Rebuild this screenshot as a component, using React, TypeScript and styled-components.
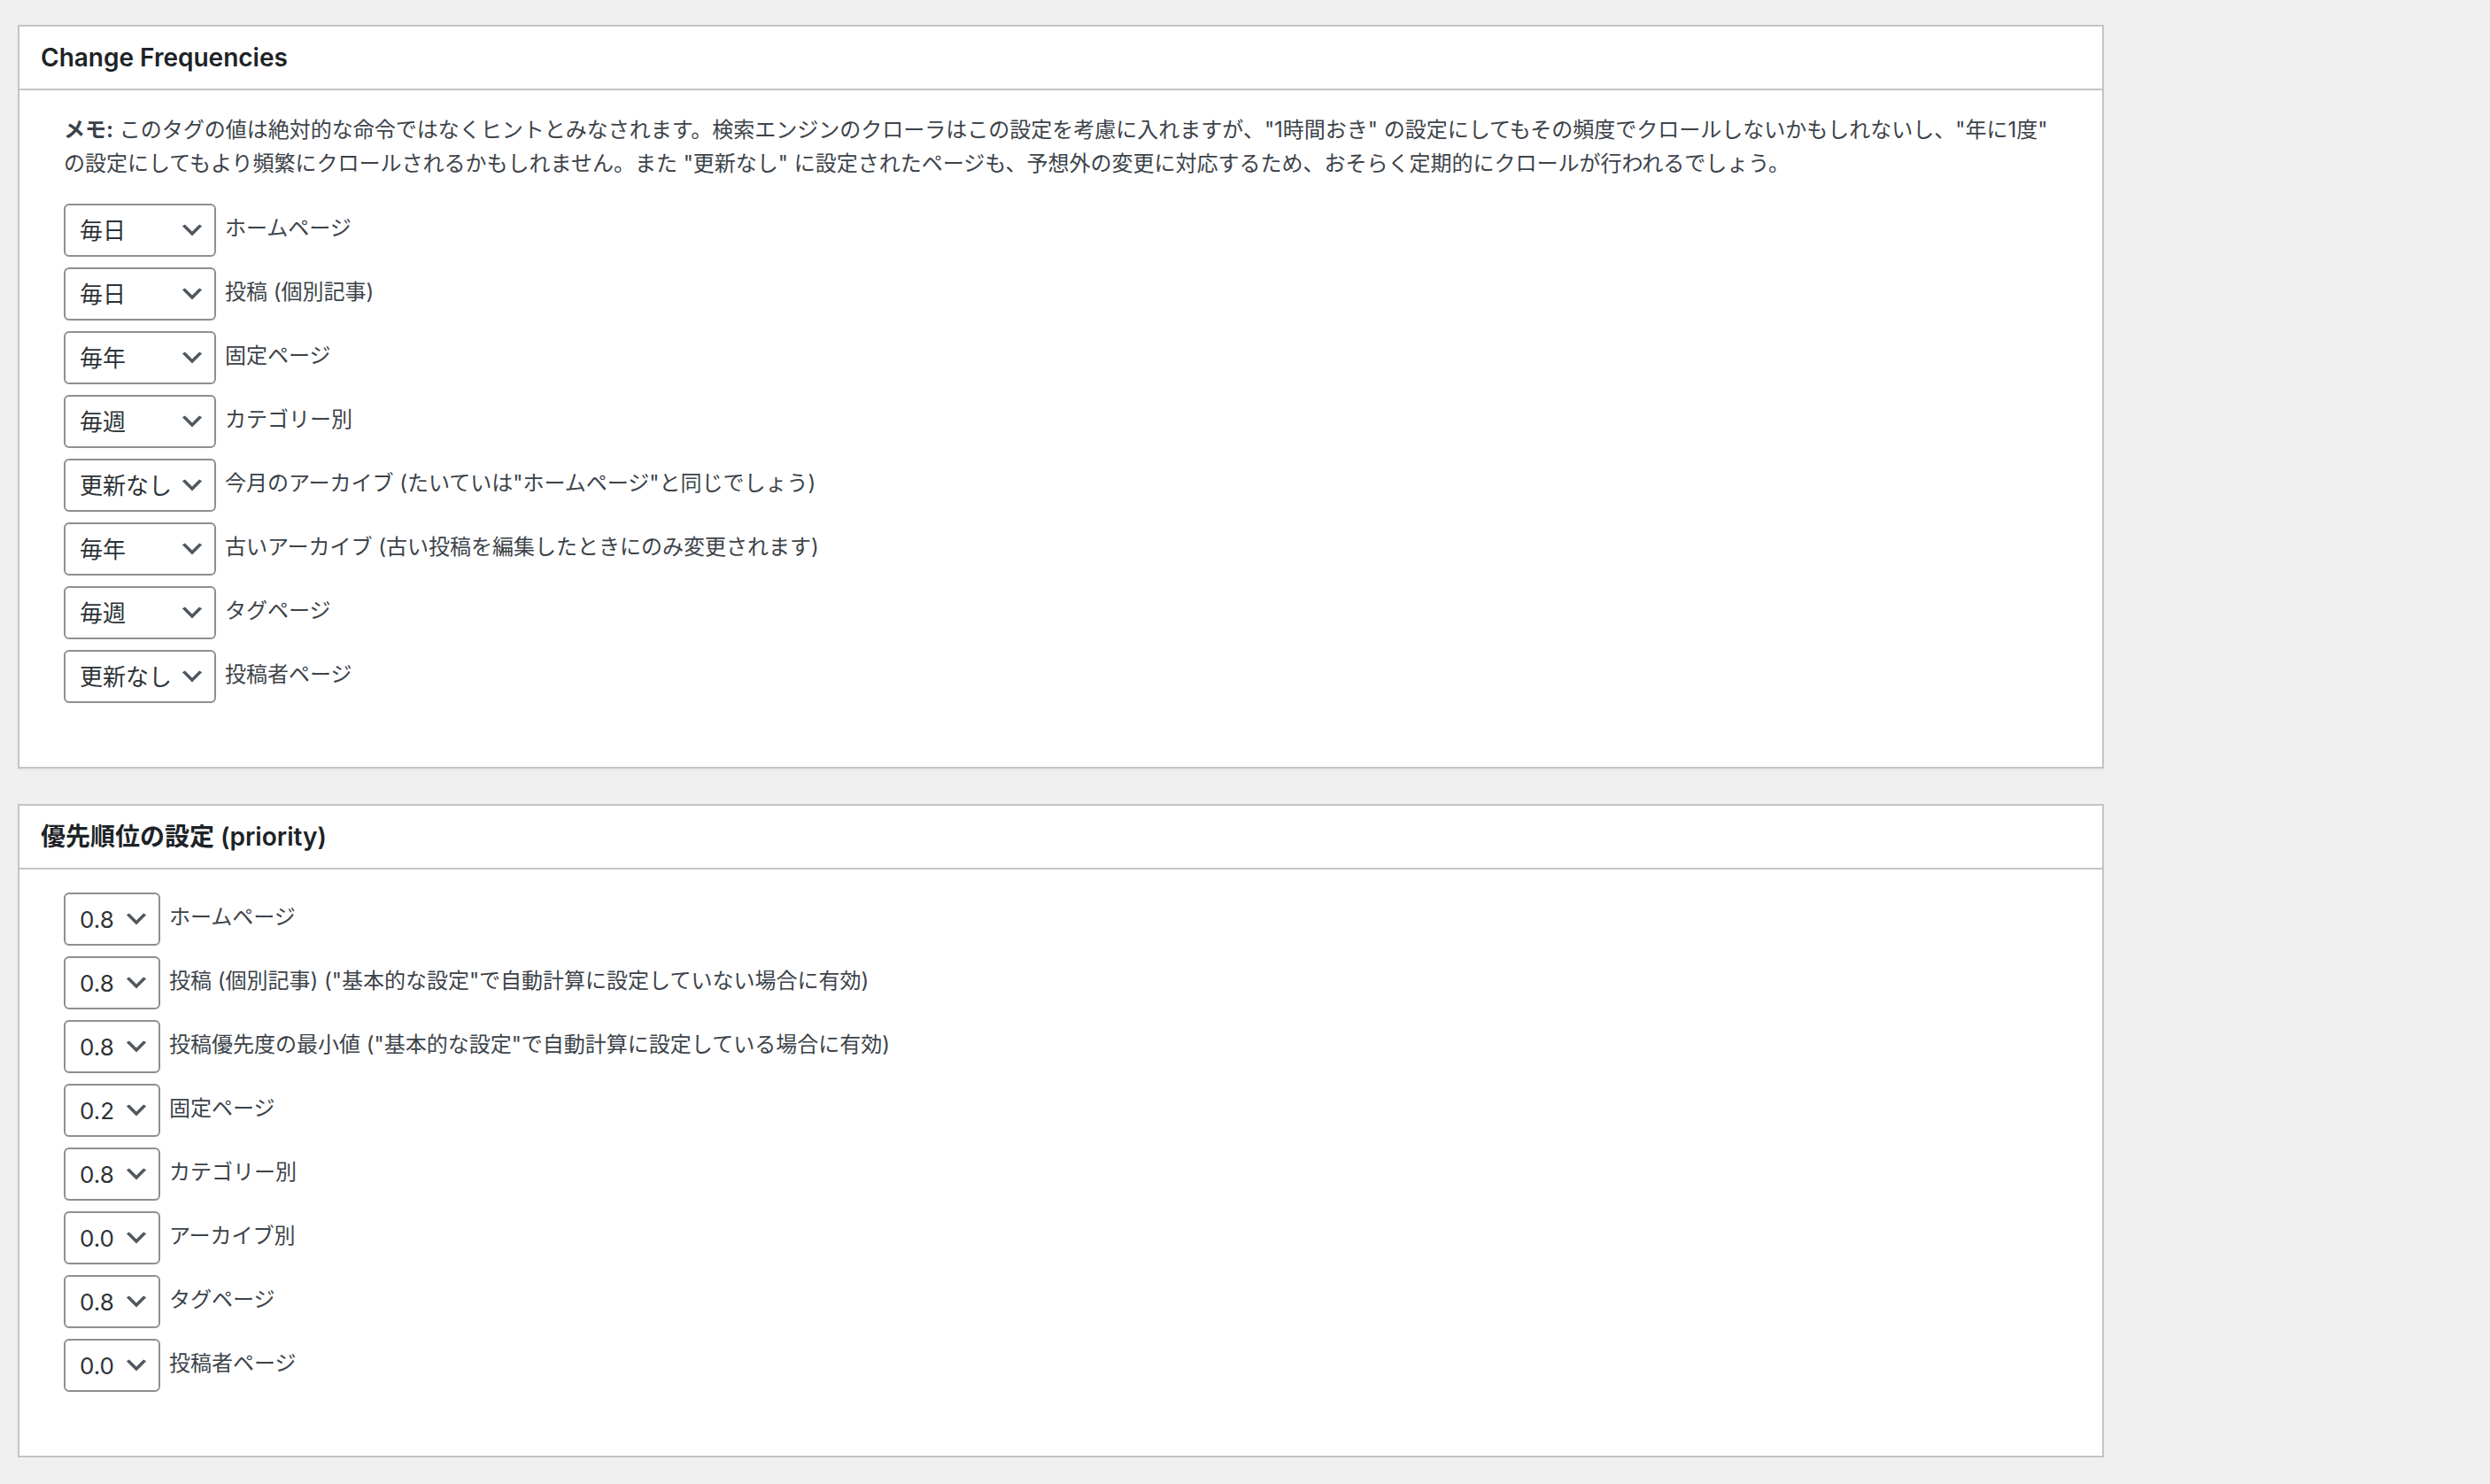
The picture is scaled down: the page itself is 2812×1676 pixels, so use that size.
import { createGlobalStyle, styled } from "styled-components";

const GlobalStyle = createGlobalStyle`
  html, body {
    margin: 0;
    padding: 0;
    background: #f0f0f1;
  }
  body {
    font-family: Inter, "Noto Sans CJK JP", sans-serif;
    color: #3c434a;
  }
`;

const Page = styled.div`
  display: flex;
  flex-direction: column;
  gap: 40px;
  padding: 28px 0 0 20px;
  width: 2356px;
`;

const Postbox = styled.section`
  background: #fff;
  border: 2px solid #c3c4c7;
  box-shadow: 0 2px 2px rgba(0, 0, 0, 0.04);
`;

const Header = styled.h2`
  margin: 0;
  padding: 16px 24px;
  line-height: 38px;
  font-size: 28px;
  font-weight: 600;
  color: #1d2327;
  border-bottom: 2px solid #c3c4c7;
`;

const Inside = styled.div`
  padding: 26px 48px 72px 50px;
`;

const Memo = styled.p`
  margin: 0 0 26px;
  font-size: 24px;
  line-height: 38px;
  white-space: nowrap;
`;

const List = styled.ul`
  list-style: none;
  margin: 0;
  padding: 0;
  display: flex;
  flex-direction: column;
  gap: 12px;
`;

const Row = styled.li`
  display: flex;
  align-items: center;
  gap: 10px;
`;

const SelectWrap = styled.div`
  position: relative;
  flex: none;
`;

const Select = styled.select<{ $width: number }>`
  appearance: none;
  display: block;
  box-sizing: border-box;
  width: ${(p) => p.$width}px;
  height: 60px;
  margin: 0;
  padding: 0 48px 0 16px;
  border: 2px solid #8c8f94;
  border-radius: 6px;
  background: #fff;
  color: #2c3338;
  font-family: Inter, "Noto Sans CJK JP", sans-serif;
  font-size: 26px;
  outline: none;
`;

const Chevron = styled.svg`
  position: absolute;
  right: 11px;
  top: 50%;
  width: 32px;
  height: 32px;
  transform: translateY(-50%);
  pointer-events: none;
`;

const Label = styled.span`
  font-size: 24px;
  line-height: 38px;
  padding-bottom: 4px;
  white-space: nowrap;
`;

const freqOptions = ["常時", "毎時", "毎日", "毎週", "毎月", "毎年", "更新なし"];
const priorityOptions = ["0.0", "0.1", "0.2", "0.3", "0.4", "0.5", "0.6", "0.7", "0.8", "0.9", "1.0"];

const freqRows = [
  ["毎日", "ホームページ"],
  ["毎日", "投稿 (個別記事)"],
  ["毎年", "固定ページ"],
  ["毎週", "カテゴリー別"],
  ["更新なし", "今月のアーカイブ (たいていは\"ホームページ\"と同じでしょう)"],
  ["毎年", "古いアーカイブ (古い投稿を編集したときにのみ変更されます)"],
  ["毎週", "タグページ"],
  ["更新なし", "投稿者ページ"],
];

const priorityRows = [
  ["0.8", "ホームページ"],
  ["0.8", "投稿 (個別記事) (\"基本的な設定\"で自動計算に設定していない場合に有効)"],
  ["0.8", "投稿優先度の最小値 (\"基本的な設定\"で自動計算に設定している場合に有効)"],
  ["0.2", "固定ページ"],
  ["0.8", "カテゴリー別"],
  ["0.0", "アーカイブ別"],
  ["0.8", "タグページ"],
  ["0.0", "投稿者ページ"],
];

const Dropdown = ({ value, options, width }: { value: string; options: string[]; width: number }) => (
  <SelectWrap>
    <Select $width={width} defaultValue={value}>
      {options.map((o) => (
        <option key={o} value={o}>
          {o}
        </option>
      ))}
    </Select>
    <Chevron viewBox="0 0 20 20">
      <path d="M5 6l5 5 5-5 2 1-7 7-7-7 2-1z" fill="#50575e" />
    </Chevron>
  </SelectWrap>
);

export default function App() {
  return (
    <>
      <GlobalStyle />
      <Page>
        <Postbox>
          <Header>Change Frequencies</Header>
          <Inside>
            <Memo>
              <b>メモ:</b> このタグの値は絶対的な命令ではなくヒントとみなされます。検索エンジンのクローラはこの設定を考慮に入れますが、"1時間おき" の設定にしてもその頻度でクロールしないかもしれないし、"年に1度"
              <br />
              の設定にしてもより頻繁にクロールされるかもしれません。また "更新なし" に設定されたページも、予想外の変更に対応するため、おそらく定期的にクロールが行われるでしょう。
            </Memo>
            <List>
              {freqRows.map(([value, label], i) => (
                <Row key={i}>
                  <Dropdown value={value} options={freqOptions} width={172} />
                  <Label>{label}</Label>
                </Row>
              ))}
            </List>
          </Inside>
        </Postbox>

        <Postbox>
          <Header>優先順位の設定 (priority)</Header>
          <Inside>
            <List>
              {priorityRows.map(([value, label], i) => (
                <Row key={i}>
                  <Dropdown value={value} options={priorityOptions} width={109} />
                  <Label>{label}</Label>
                </Row>
              ))}
            </List>
          </Inside>
        </Postbox>
      </Page>
    </>
  );
}
